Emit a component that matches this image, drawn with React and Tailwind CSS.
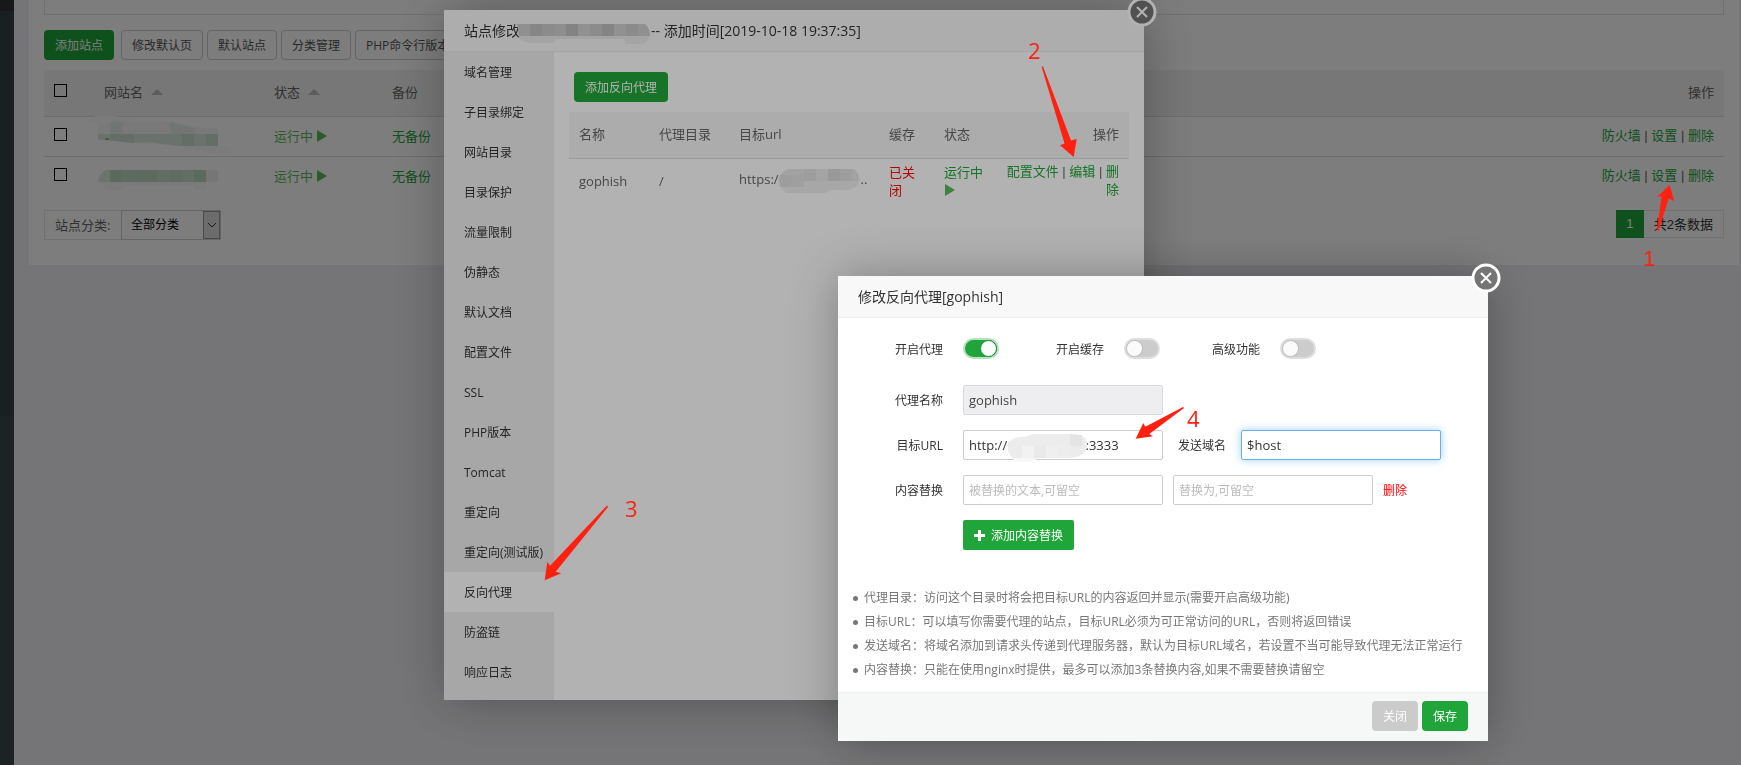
import React, { useState } from "react";

const menuItems = [
  "域名管理",
  "子目录绑定",
  "网站目录",
  "目录保护",
  "流量限制",
  "伪静态",
  "默认文档",
  "配置文件",
  "SSL",
  "PHP版本",
  "Tomcat",
  "重定向",
  "重定向(测试版)",
  "反向代理",
  "防盗链",
  "响应日志",
];

const toolbarButtons = ["修改默认页", "默认站点", "分类管理", "PHP命令行版本"];

const notes = [
  "代理目录：访问这个目录时将会把目标URL的内容返回并显示(需要开启高级功能)",
  "目标URL：可以填写你需要代理的站点，目标URL必须为可正常访问的URL，否则将返回错误",
  "发送域名：将域名添加到请求头传递到代理服务器，默认为目标URL域名，若设置不当可能导致代理无法正常运行",
  "内容替换：只能在使用nginx时提供，最多可以添加3条替换内容,如果不需要替换请留空",
];

// row of mosaic cells, 12px each
const Cells = ({ x, y, colors }) =>
  colors.map((c, i) => (
    <rect key={i} x={x + i * 12} y={y} width="12" height="12" fill={c} />
  ));

const PlayIcon = () => (
  <svg className="inline-block h-3 w-3 align-[-1px]" viewBox="0 0 12 12" aria-hidden="true">
    <path d="M1 0 L11 6 L1 12 Z" fill="#5cb85c" />
  </svg>
);

const SortIcon = () => (
  <svg className="ml-2 inline-block h-2 w-3 align-[1px]" viewBox="0 0 12 8" aria-hidden="true">
    <path d="M0 7 L6 1 L12 7 Z" fill="#bbb" />
  </svg>
);

const CloseButton = () => (
  <button type="button" aria-label="关闭" className="absolute -top-[13px] -right-[13px] h-[30px] w-[30px]">
    <svg viewBox="0 0 30 30" className="h-full w-full">
      <circle cx="15" cy="15" r="13" fill="#757575" stroke="#fff" strokeWidth="3" />
      <path d="M10 10 L20 20 M20 10 L10 20" stroke="#fff" strokeWidth="2" />
    </svg>
  </button>
);

const SiteNameOne = () => (
  <svg className="absolute -top-[2px] left-[-17px] h-10 w-[147px]" viewBox="0 0 147 40" aria-hidden="true">
    <path d="M0 5 L8 0 L28 0 L40 3 L82 5 L108 11 L131 14 L131 30 L146 31 L138 39 L120 36 L88 30 L50 27 L11 24 L11 6 Z" fill="#f9faf9" />
    <path d="M11 7 h12 v-1 h60 l25 6 h23 v18 h-38 L50 27 L45 27 L11 24 Z" fill="#f4f6f4" />
    <path d="M23 6 h12 v12 h-12z M83 6 l25 6 v6 h-25z" fill="#e8f1ea" />
    <path d="M11 18 h120 v12 h-38 L60 26 L45 27 L11 23 Z" fill="#dbe8de" />
    <path d="M23 18 h24 v9 l-24 -3z M95 18 h12 v12 h-12z M119 18 h12 v12 h-12z" fill="#cddfd1" />
    <path d="M18 23 h4" stroke="#20a53a" strokeWidth="1" />
  </svg>
);

const SiteNameTwo = () => (
  <svg className="absolute top-3 left-[-6px] h-6 w-[120px]" viewBox="0 0 120 24" aria-hidden="true">
    <path d="M8 0 h112 v12 h-12 v8 h-12 v-5 H30 l-8 6 h-12 Q-4 10 8 0 Z" fill="#f6f9f6" />
    <path d="M8 0 h4 v12 h-12 Q1 3 8 0 Z" fill="#dfeae1" />
    <Cells
      x={12}
      y={0}
      colors={["#bbd8c1", "#c0dbc5", "#bcd9c2", "#beDac3", "#c8dfcc", "#c3ddc8", "#cbe0cf", "#bbd8c1", "#ecf2ed"]}
    />
  </svg>
);

const Switch = ({ id, checked, onChange }) => (
  <input
    id={id}
    type="checkbox"
    checked={checked}
    onChange={onChange}
    className="mr-[-1px] h-[21px] w-9 appearance-none rounded-full border-2 border-[#dedede] bg-[#ccc] before:block before:h-[17px] before:w-[17px] before:rounded-full before:border before:border-[#bbb] before:bg-[#fbfbfb] checked:border-[#b9dfc1] checked:bg-[#20a53a] checked:before:ml-[15px] checked:before:border-[#1b8c31]"
  />
);

const SitePage = () => (
  <div className="flex min-h-screen bg-[#efeff3]">
    <aside className="flex w-[14px] shrink-0 flex-col bg-[#3c464d]">
      <div className="h-[11px] bg-[#303236]"></div>
      <div className="h-[405px] bg-[#363f47]"></div>
    </aside>
    <main className="min-w-0 flex-1 pr-[2px] pl-[15px]">
      <section className="bg-white px-[15px] pb-[25px]">
        <div className="h-[15px] border-x border-b border-[#e5e5e5]"></div>
        <div className="flex gap-1 pt-[15px] text-xs">
          <button type="button" className="mr-[3px] h-[30px] w-[70px] rounded-sm bg-[#20a53a] pt-px text-white">
            添加站点
          </button>
          {toolbarButtons.map((name) => (
            <button key={name} type="button" className="h-[30px] rounded-sm border border-[#ccc] px-[10px] pt-px text-[#555]">
              {name}
            </button>
          ))}
        </div>
        <table className="mt-[10px] w-full table-fixed text-left text-[13px] leading-[18px] text-[#666]">
          <thead>
            <tr className="h-[46px] border-b border-[#ddd] bg-[#f3f3f3]">
              <th className="w-[50px] pb-1 pl-[10px]">
                <input type="checkbox" aria-label="全选" className="block h-[13px] w-[13px] appearance-none border border-black" />
              </th>
              <th className="w-[170px] pb-[2px] pl-[10px] font-normal">
                网站名
                <SortIcon />
              </th>
              <th className="w-[118px] pb-[2px] pl-[10px] font-normal">
                状态
                <SortIcon />
              </th>
              <th className="pb-[2px] pl-[10px] font-normal">备份</th>
              <th className="pr-[10px] pb-[2px] text-right font-normal">操作</th>
            </tr>
          </thead>
          <tbody>
            {[SiteNameOne, SiteNameTwo].map((SiteName, i) => (
              <tr key={i} className="h-10 border-b border-[#ddd] last:border-b-0">
                <td className="pb-1 pl-[10px]">
                  <input type="checkbox" aria-label="选择站点" className="block h-[13px] w-[13px] appearance-none border border-black" />
                </td>
                <td className="pl-[10px]">
                  <div className="relative h-9">
                    <SiteName />
                  </div>
                </td>
                <td className="pl-[10px]">
                  <a href="#status" className="text-[#5cb85c]">
                    运行中 <PlayIcon />
                  </a>
                </td>
                <td className="pl-[10px]">
                  <a href="#backup" className="text-[#20a53a]">无备份</a>
                </td>
                <td className="pr-[10px] text-right font-['Liberation_Sans','Noto_Sans_CJK_SC',sans-serif]">
                  <a href="#firewall" className="text-[#20a53a]">防火墙</a> | <a href="#setting" className="text-[#20a53a]">设置</a> |{" "}
                  <a href="#delete" className="text-[#20a53a]">删除</a>
                </td>
              </tr>
            ))}
          </tbody>
        </table>
        <div className="mt-[14px] flex items-start justify-between text-[13px]">
          <div className="flex h-[30px]">
            <label htmlFor="category" className="w-[77px] border border-r-0 border-[#e5e5e5] pl-[10px] leading-7 text-[#666]">
              站点分类:
            </label>
            <div className="relative">
              <select id="category" className="h-[30px] w-[100px] appearance-none border border-[#ccc] pl-[9px] text-xs text-black">
                <option>全部分类</option>
              </select>
              <span className="pointer-events-none absolute top-px right-px flex h-7 w-[17px] items-center justify-center border border-[#999] bg-[#ddd]">
                <svg className="h-2 w-2" viewBox="0 0 8 8" fill="none" stroke="#333">
                  <path d="M0 2 L4 6 L8 2" />
                </svg>
              </span>
            </div>
          </div>
          <div className="flex h-7 leading-7 font-['Liberation_Sans','Noto_Sans_CJK_SC',sans-serif]">
            <span className="w-7 bg-[#20a53a] text-center text-white">1</span>
            <span className="border border-l-0 border-[#e5e5e5] px-[10px] leading-7 text-[#333]">共2条数据</span>
          </div>
        </div>
      </section>
    </main>
  </div>
);

const SiteModal = () => (
  <div className="fixed top-[10px] left-[444px] w-[700px] rounded-xs bg-white shadow-[1px_1px_50px_rgba(0,0,0,0.3)]">
    <h2 className="flex h-[42px] items-center border-b border-[#eee] bg-[#f8f8f8] pt-px pl-5 text-sm text-[#333]">
      站点修改
      <svg className="mr-px -ml-[3px] h-6 w-[133px] translate-y-1" viewBox="0 0 133 24" aria-hidden="true">
        <path d="M0 10 h133 q0 8 -8 11 h-16 l-2 -5 h-70 v4 h-26 q-8 -2 -11 -10Z" fill="#ebebeb" />
        <path d="M0 1 h128 q5 4 5 12 h-131 Z" fill="#cfcfcf" />
        <Cells x={13} y={1} colors={["#c0c0c0", "#c8c8c8", "#cccccc", "#bcbcbc", "#d0d0d0", "#c9c9c9", "#bdbdbd", "#d0d0d0", "#c8c8c8"]} />
      </svg>
      -- 添加时间[2019-10-18 19:37:35]
    </h2>
    <CloseButton />
    <div className="flex">
      <nav className="w-[110px] shrink-0 bg-[#f0f0f1] pb-2 text-xs text-[#333]">
        {menuItems.map((item) => (
          <a
            key={item}
            href="#menu"
            className={`block h-10 pt-px pl-5 leading-10 whitespace-nowrap ${item === "反向代理" ? "bg-white" : ""}`}
          >
            {item}
          </a>
        ))}
      </nav>
      <div className="min-w-0 flex-1 px-[15px] pt-5">
        <button type="button" className="ml-[5px] h-[30px] rounded-sm bg-[#20a53a] px-[11px] pt-px text-xs text-white">
          添加反向代理
        </button>
        <table className="mt-[10px] w-full table-fixed text-left text-[13px] leading-[18px] text-[#666]">
          <thead>
            <tr className="h-[46px] border-b border-[#ddd] bg-[#f6f6f6]">
              <th className="w-20 pb-[2px] pl-[10px] font-normal">名称</th>
              <th className="w-20 pb-[2px] pl-[10px] font-normal">代理目录</th>
              <th className="w-[150px] pb-[2px] pl-[10px] font-normal">目标url</th>
              <th className="w-[55px] pb-[2px] pl-[10px] font-normal">缓存</th>
              <th className="w-[61px] pb-[2px] pl-[10px] font-normal">状态</th>
              <th className="px-[10px] pb-[2px] text-right font-normal">操作</th>
            </tr>
          </thead>
          <tbody>
            <tr className="h-[46px]">
              <td className="pl-[10px]">gophish</td>
              <td className="pl-[10px]">/</td>
              <td className="pl-[10px] whitespace-nowrap">
                https:/
                <svg className="-ml-[3px] inline-block h-6 w-[85px] align-middle" viewBox="0 0 85 24" aria-hidden="true">
                  <path d="M12 0 h66 q10 9 3 17 q-6 5 -14 4 h-12 l-6 3 h-38 Q-6 12 12 0 Z" fill="#efefef" />
                  <path d="M12 0 h66 l4 5 v7 h-80 Q3 4 12 0 Z" fill="#e9e9e9" />
                  <Cells x={4} y={6} colors={["#e1e1e1", "#e4e4e4"]} />
                  <Cells x={28} y={0} colors={["#e2e2e2", "#ebebeb", "#dcdcdc", "#e3e3e3"]} />
                </svg>
                ..
              </td>
              <td className="px-[10px]">
                <a href="#cache" className="text-[red]">已关闭</a>
              </td>
              <td className="px-[10px]">
                <a href="#state" className="text-[#20a53a]">
                  运行中 <PlayIcon />
                </a>
              </td>
              <td className="px-[10px] text-right font-['Liberation_Sans','Noto_Sans_CJK_SC',sans-serif]">
                <a href="#conf" className="text-[#20a53a]">配置文件</a> | <a href="#edit" className="text-[#20a53a]">编辑</a> |{" "}
                <a href="#remove" className="text-[#20a53a]">删除</a>
              </td>
            </tr>
          </tbody>
        </table>
      </div>
    </div>
  </div>
);

const labelClass = "mr-5 pt-[2px] text-right";

const inputClass =
  "h-[30px] w-[200px] rounded-xs border border-[#ccc] bg-white px-[5px] text-[13px] text-[#333] outline-none placeholder:text-xs placeholder:text-[#bbb]";

const ProxyModal = () => {
  const [proxyOn, setProxyOn] = useState(true);
  const [cacheOn, setCacheOn] = useState(false);
  const [advanced, setAdvanced] = useState(false);
  // the address in the middle is hidden
  const [url, setUrl] = useState("http://1" + "\u00a0".repeat(21) + ":3333");
  const [host, setHost] = useState("$host");

  return (
    <div className="fixed top-[276px] left-[838px] w-[650px] rounded-xs bg-white shadow-[1px_1px_50px_rgba(0,0,0,0.3)]">
      <h2 className="h-[42px] border-b border-[#eee] bg-[#f8f8f8] pl-5 text-sm leading-[42px] text-[#333]">
        修改反向代理[gophish]
      </h2>
      <CloseButton />
      <form className="pt-5 text-xs text-[#333]">
        <div className="flex items-center">
          <label htmlFor="proxy-on" className={`w-[105px] ${labelClass}`}>开启代理</label>
          <Switch id="proxy-on" checked={proxyOn} onChange={() => setProxyOn(!proxyOn)} />
          <label htmlFor="cache-on" className={`w-[106px] ${labelClass}`}>开启缓存</label>
          <Switch id="cache-on" checked={cacheOn} onChange={() => setCacheOn(!cacheOn)} />
          <label htmlFor="advanced" className={`w-[101px] ${labelClass}`}>高级功能</label>
          <Switch id="advanced" checked={advanced} onChange={() => setAdvanced(!advanced)} />
        </div>
        <div className="mt-[26px] flex flex-col gap-[15px]">
          <div className="flex items-center">
            <label htmlFor="name" className={`w-[105px] ${labelClass}`}>代理名称</label>
            <input
              id="name"
              readOnly
              value="gophish"
              className="h-[30px] w-[200px] rounded-xs border border-[#d9d8ea] bg-[#eee] px-[5px] text-[13px] text-[#444] outline-none"
            />
          </div>
          <div className="flex items-center">
            <label htmlFor="url" className={`w-[105px] ${labelClass}`}>目标URL</label>
            <div className="relative">
              <input id="url" value={url} onChange={(e) => setUrl(e.target.value)} className={inputClass} />
              <svg className="absolute top-1 left-11 h-7 w-20" viewBox="0 0 80 28" aria-hidden="true">
                <path d="M26 0 H68 Q80 2 80 10 Q80 22 64 24 H34 L22 28 H12 Q8 28 5 24 Q-2 16 2 8 Q8 2 18 3 Z" fill="#f7f7f7" />
                <path d="M26 0 H68 Q80 2 80 10 Q80 22 64 24 H6 Q-2 16 2 8 Q8 2 18 3 Z" fill="#ececed" />
                <Cells x={15} y={12} colors={["#f2f2f3", "#e9e9ea", "#efeff0", "#ededee"]} />
                <rect x="63" y="1" width="12" height="11" fill="#e4e4e5" />
              </svg>
            </div>
            <label htmlFor="host" className="mx-[15px] w-12 pt-[2px]">发送域名</label>
            <input
              id="host"
              value={host}
              onChange={(e) => setHost(e.target.value)}
              className="h-[30px] w-[200px] rounded-xs border border-[#66afe9] bg-white px-[5px] text-[13px] text-[#333] shadow-[0_0_8px_rgba(102,175,233,0.6)] outline-none"
            />
          </div>
          <div className="flex items-center">
            <label htmlFor="from" className={`w-[105px] ${labelClass}`}>内容替换</label>
            <input id="from" placeholder="被替换的文本,可留空" className={inputClass} />
            <input aria-label="替换为" placeholder="替换为,可留空" className={`ml-[10px] ${inputClass}`} />
            <a href="#del" className="ml-[10px] pt-[2px] text-[red]">删除</a>
          </div>
          <button type="button" className="ml-[125px] flex h-[30px] items-center gap-[6px] self-start rounded-xs bg-[#20a53a] px-[11px] pt-px text-white">
            <svg className="h-[11px] w-[11px]" viewBox="0 0 11 11" aria-hidden="true">
              <path d="M5.5 0 V11 M0 5.5 H11" stroke="#fff" strokeWidth="3" />
            </svg>
            添加内容替换
          </button>
        </div>
        <ul className="mt-9 pb-[10px] pl-[15px] leading-6 whitespace-nowrap text-[#777]">
          {notes.map((note) => (
            <li key={note} className="flex items-center gap-[6px]">
              <span className="h-[5px] w-[5px] rounded-full bg-[#777]"></span>
              {note}
            </li>
          ))}
        </ul>
        <div className="flex justify-end gap-1 border-t border-[#edf1f2] bg-[#f6f8f8] pt-2 pr-5 pb-[10px] text-white">
          <button type="button" className="h-[30px] w-[46px] rounded-sm bg-[#cbcbcb] pt-px">关闭</button>
          <button type="button" className="h-[30px] w-[46px] rounded-sm bg-[#20a53a] pt-px">保存</button>
        </div>
      </form>
    </div>
  );
};

// red step arrows and numbers drawn over the windows
const Steps = () => (
  <div className="pointer-events-none fixed inset-0 text-[22px] leading-6 text-[#ff2010]">
    <svg className="absolute top-[184px] left-[1656px] h-12 w-5" viewBox="1656 184 20 48" fill="currentColor">
      <path d="M1669.7 185 L1657 197 L1661.7 196.3 L1657 229.5 L1658.5 231.5 L1668.7 198.3 L1674.3 201.3 Z" />
    </svg>
    <span className="absolute top-[247px] left-[1643px] font-['Liberation_Sans',sans-serif]">1</span>
    <svg className="absolute top-[66px] left-[1040px] h-[92px] w-[38px]" viewBox="1040 66 38 92" fill="currentColor">
      <path d="M1041.5 66.5 L1043 66.5 L1071 140.5 L1076.7 139 L1073.7 157 L1060 145.3 L1064.5 143.5 Z" />
    </svg>
    <span className="absolute top-[38px] left-[1028px]">2</span>
    <svg className="absolute top-[505px] left-[544px] h-[76px] w-[65px]" viewBox="544 505 65 76" fill="currentColor">
      <path d="M607 505.5 L608 507 L555.7 571.7 L561.3 573.3 L544.7 580.3 L547.3 562 L550 565.7 Z" />
    </svg>
    <span className="absolute top-[496px] left-[625px]">3</span>
    <svg className="absolute top-[406px] left-[1135px] h-[34px] w-[50px]" viewBox="1135 406 50 34" fill="currentColor">
      <path d="M1183 407 L1184 408 L1149.3 434 L1153 436.3 L1135.7 438.7 L1143.3 423 L1145.3 426.7 Z" />
    </svg>
    <span className="absolute top-[406px] left-[1187px]">4</span>
  </div>
);

const App = () => {
  return (
    <div className="font-['Open_Sans','Noto_Sans_CJK_SC',sans-serif]">
      <SitePage />
      <div className="fixed inset-0 bg-black/30"></div>
      <SiteModal />
      <div className="fixed inset-0 bg-black/30"></div>
      <ProxyModal />
      <Steps />
    </div>
  );
};

export default App;
